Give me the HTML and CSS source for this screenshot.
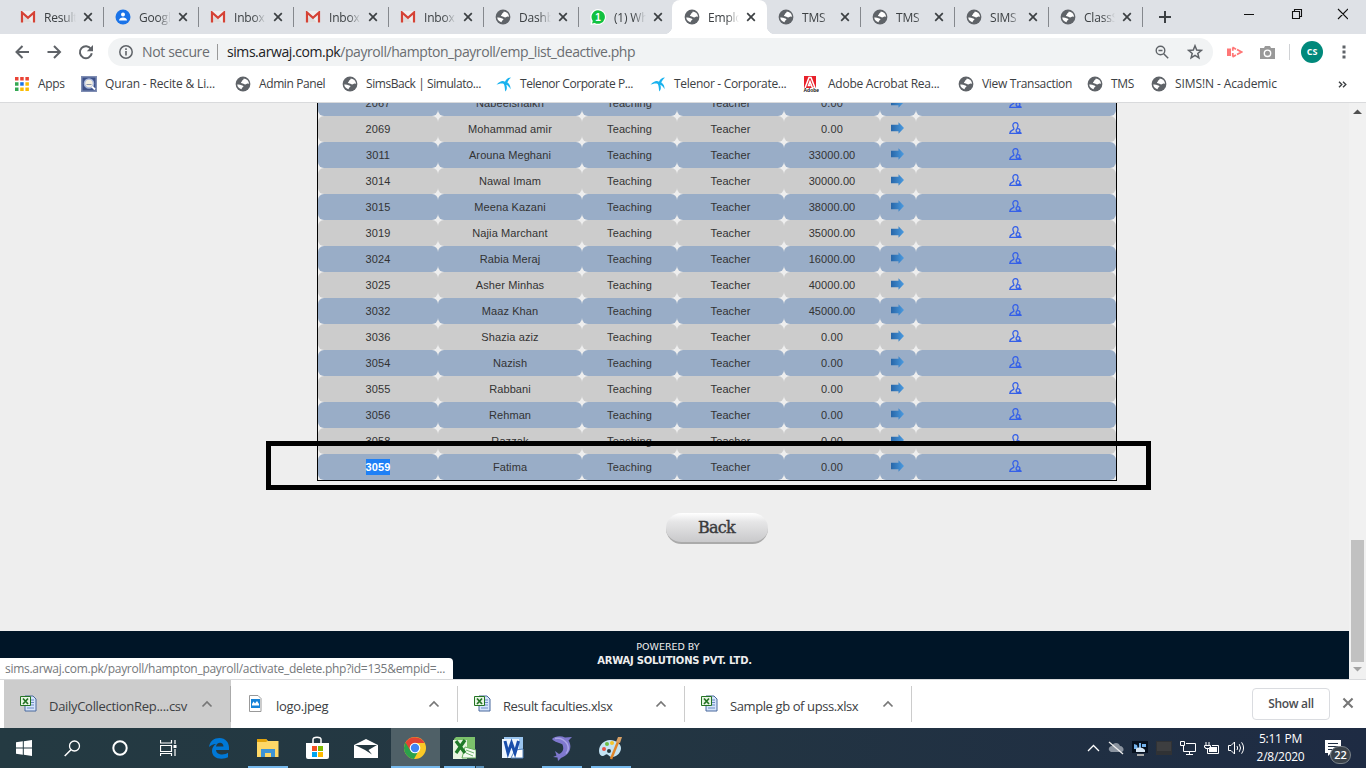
FILE: index.html
```html
<!DOCTYPE html>
<html lang="en">
<head>
<meta charset="utf-8">
<title>Employee list</title>
<link rel="stylesheet" href="styles.css">
</head>
<body>
<svg class="defs" width="0" height="0">
  <symbol id="globe" viewBox="0 0 16 16"><circle cx="8" cy="8" r="7.400" fill="#5f6368"/><path d="M8.500 2.600c.8.500-.2 1.200-1 1.600-.7.400-.4 1.400-1.300 1.900-.6.500.2 1.400 1.500 1.500 1.300.1 1.100 1 2.500 1 1.100 0 1.400-1.200 2.600-1l1.300.2c-.2-2.900-2.600-5.100-5.600-5.200z" fill="#fff"/><path d="M2.200 8.600c1.600-.2 3.300 0 4.400.7 1 .6 1.900.4 1.800 1.200-.1.900-1.300.8-1.600 1.700-.1.500 0 .9-.3 1.100C4.200 12.700 2.400 11 2.200 8.600z" fill="#fff"/></symbol>
  <symbol id="gmail" viewBox="0 0 16 12"><path d="M1 0h14v11.500H1z" fill="#eee"/><path d="M1 11.500h11L5 4z" fill="#ddd"/><path d="M2 11.500V1.500L8 6.800l6-5.300v10" fill="none" stroke="#d54235" stroke-width="2.200"/></symbol>
  <symbol id="x" viewBox="0 0 10 10"><path d="M1.200 1.200l7.600 7.600M8.800 1.200L1.200 8.800" stroke="currentColor" stroke-width="1.700"/></symbol>
  <symbol id="telenor" viewBox="0 0 16 16"><path d="M.5 8.800C4 4.300 7.500 4.300 9 5.800c1-2.500 3-4.300 6-4.300C13.200 3 12 4.800 11.300 6.500c2.200 1.300 3.500 4 3.200 6.800-1-2.300-2.400-3.800-4.200-4.600.8 2.300 1 4.800-1 6.800C8.700 13 9 10 7.800 7.900 5.500 6.800 3 7.700.5 8.800z" fill="#19b2ee"/></symbol>
  <symbol id="arrow" viewBox="0 0 13 12"><linearGradient id="ag" x1="0" x2="1"><stop offset="0" stop-color="#2766a8"/><stop offset="1" stop-color="#4b9be0"/></linearGradient><path d="M0 2.700h7.500V.3L13 6l-5.500 5.700V9.300H0z" fill="url(#ag)"/></symbol>
  <symbol id="user" viewBox="0 0 13 13"><path d="M6.500.7C4.600.7 3.800 2 3.900 3.700 4 5 4.800 5.600 4.900 7 4.500 8.400.9 8 .8 11.300H12.500M6.500.7C8.400.7 9.100 2 9 3.700 8.900 4.900 8.300 5.500 8.100 6.500" fill="none" stroke="#3560e8" stroke-width="1.300"/><circle cx="9" cy="8.500" r="1.900" fill="none" stroke="#3560e8" stroke-width="1.300"/><path d="M10.300 9.800l2 1.800" stroke="#3560e8" stroke-width="1.400"/></symbol>
  <symbol id="chev" viewBox="0 0 12 8"><path d="M1.500 6.500L6 2l4.500 4.500" fill="none" stroke="currentColor" stroke-width="1.700"/></symbol>
  <symbol id="xls" viewBox="0 0 17 17"><path d="M5 1h8l3 3v12H5z" fill="#d5e4fb" stroke="#48699c"/><path d="M10 5h4M10 7.500h4M10 10h4M7 13h7" stroke="#6b8cc3"/><path d="M.5 1.500h10v9H.5z" fill="#e8f5e4" stroke="#247424"/><path d="M3 3.500l5 5.500M8 3.500L3 9" stroke="#247424" stroke-width="1.700"/></symbol>
</svg>

<header class="browser">
  <div class="tabs">
    <div class="tab"><svg class="fav mail"><use href="#gmail"/></svg><span>Result</span><svg class="close"><use href="#x"/></svg></div>
    <div class="tab"><svg class="fav" viewBox="0 0 16 16"><circle cx="8" cy="8" r="7.500" fill="#1a73e8"/><circle cx="8" cy="5.500" r="2" fill="#fff"/><path d="M4 11.500c0-4 8-4 8 0z" fill="#fff"/></svg><span>Google</span><svg class="close"><use href="#x"/></svg></div>
    <div class="tab"><svg class="fav mail"><use href="#gmail"/></svg><span>Inbox</span><svg class="close"><use href="#x"/></svg></div>
    <div class="tab"><svg class="fav mail"><use href="#gmail"/></svg><span>Inbox</span><svg class="close"><use href="#x"/></svg></div>
    <div class="tab"><svg class="fav mail"><use href="#gmail"/></svg><span>Inbox</span><svg class="close"><use href="#x"/></svg></div>
    <div class="tab"><svg class="fav"><use href="#globe"/></svg><span>Dashb</span><svg class="close"><use href="#x"/></svg></div>
    <div class="tab plain"><svg class="fav" viewBox="0 0 16 16"><path d="M8 0a8 8 0 1 1-3.500 15.200L.5 16l.8-4A8 8 0 0 1 8 0z" fill="#fff"/><path d="M8 1.200a6.800 6.800 0 1 1-3.300 12.700l-2.700.7.800-2.700A6.800 6.800 0 0 1 8 1.200z" fill="#12c140"/><text x="5.300" y="12" class="badge1">1</text></svg><span>(1) Wh</span><svg class="close"><use href="#x"/></svg></div>
    <div class="tab active"><svg class="fav"><use href="#globe"/></svg><span>Emplo</span><svg class="close"><use href="#x"/></svg></div>
    <div class="tab"><svg class="fav"><use href="#globe"/></svg><span>TMS</span><svg class="close"><use href="#x"/></svg></div>
    <div class="tab"><svg class="fav"><use href="#globe"/></svg><span>TMS</span><svg class="close"><use href="#x"/></svg></div>
    <div class="tab"><svg class="fav"><use href="#globe"/></svg><span>SIMS</span><svg class="close"><use href="#x"/></svg></div>
    <div class="tab"><svg class="fav"><use href="#globe"/></svg><span>ClassS</span><svg class="close"><use href="#x"/></svg></div>
    <svg class="newtab" viewBox="0 0 12 12"><path d="M6 0v12M0 6h12" stroke="#3c4043" stroke-width="2"/></svg>
    <svg class="winbtns" viewBox="0 0 104 12"><path d="M0 6.500h10M48.500 3.500h7v7h-7zM50.500 3V1.500h7v7H56M94 1l10 10M104 1L94 11" fill="none" stroke="#111" stroke-width="1.100"/></svg>
  </div>
  <div class="toolbar">
    <svg class="nav" viewBox="0 0 80 16"><path d="M15 8H2.500M8.500 2l-6 6 6 6M33.500 8H46M40 2l6 6-6 6M77 5a6 6 0 1 0 .8 4.300" fill="none" stroke="#5f6368" stroke-width="2"/><path d="M79 1v6.200h-6.200z" fill="#5f6368"/></svg>
    <div class="omnibox">
      <svg class="info" viewBox="0 0 14 14"><circle cx="7" cy="7" r="6.200" fill="none" stroke="#5f6368" stroke-width="1.500"/><path d="M7 6v4.500M7 3.300V5" stroke="#5f6368" stroke-width="1.600"/></svg>
      <span class="secure">Not secure</span>
      <span class="url"><b>sims.arwaj.com.pk</b>/payroll/hampton_payroll/emp_list_deactive.php</span>
      <svg class="zoomic" viewBox="0 0 14 14"><circle cx="5.500" cy="5.500" r="4.300" fill="none" stroke="#5f6368" stroke-width="1.400"/><path d="M3.500 5.500h4M8.700 8.700l4.500 4.500" stroke="#5f6368" stroke-width="1.500"/></svg>
      <svg class="star" viewBox="0 0 16 16"><path d="M8 1.800l1.700 4.300 4.600.3-3.500 3 1.100 4.500L8 11.400l-3.900 2.500 1.100-4.500-3.500-3 4.600-.3z" fill="none" stroke="#5f6368" stroke-width="1.500"/></svg>
    </div>
    <svg class="ext" viewBox="0 0 16 12"><path d="M0 2.500h4v7.500H0z" fill="#f77"/><path d="M5.800 1.500v3.200M5.800 7v3.500M5.500 1.300l3.500 1.900M10 3.500l4.500 2.500-4.500 2.500M9 9l-3.500 1.900" fill="none" stroke="#f77" stroke-width="1.800"/></svg>
    <svg class="cam" viewBox="0 0 15 13"><path d="M0 2h4l1-2h5l1 2h4v11H0z" fill="#999"/><circle cx="7.500" cy="7.300" r="3.200" fill="none" stroke="#fff" stroke-width="1.400"/></svg>
    <i class="divider"></i>
    <span class="avatar">CS</span>
    <svg class="dots" viewBox="0 0 4 14"><path d="M.5.500h3v3h-3zM.5 5.500h3v3h-3zM.5 10.500h3v3h-3z" fill="#5f6368"/></svg>
  </div>
  <nav class="bookmarks">
    <a><svg viewBox="0 0 16 16"><path d="M1 1h3.500v3.500H1zM6.200 1h3.500v3.500H6.200zM11.400 1h3.500v3.500h-3.500z" fill="#ea4335"/><path d="M1 6.200h3.500v3.500H1zM1 11.400h3.500v3.500H1z" fill="#34a853"/><path d="M6.200 6.200h3.500v3.500H6.200z" fill="#1a73e8"/><path d="M11.400 6.200h3.500v3.500h-3.500zM11.400 11.400h3.500v3.500h-3.500zM6.200 11.400h3.500v3.500H6.200z" fill="#fbbc04"/></svg>Apps</a>
    <a class="b-quran"><svg viewBox="0 0 16 16"><path d="M0 0h16v16H0z" fill="#7f8db3"/><path d="M1.500 1.500h13v13h-13z" fill="#3c5088"/><circle cx="8" cy="7.500" r="4.500" fill="#f3efe1" stroke="#a8b7dc" stroke-width="1.500"/><path d="M5.500 8.500h5" stroke="#8a93ad"/><path d="M11 10.500l3 3" stroke="#fff" stroke-width="1.800"/></svg>Quran - Recite &amp; Li...</a>
    <a class="b-admin"><svg><use href="#globe"/></svg>Admin Panel</a>
    <a class="b-sims"><svg><use href="#globe"/></svg>SimsBack | Simulato...</a>
    <a class="b-tel"><svg><use href="#telenor"/></svg>Telenor Corporate P...</a>
    <a><svg><use href="#telenor"/></svg>Telenor - Corporate...</a>
    <a class="b-adobe"><svg viewBox="0 0 16 16"><path d="M1 0h12v12H1z" fill="#e8202a"/><path d="M2 12L6 1.500h2L12 12H9.500L7 5.500 5.500 9.500h2" fill="none" stroke="#fff" stroke-width="1.500"/><text x="0.500" y="15.800" class="adobe">Adobe</text></svg>Adobe Acrobat Rea...</a>
    <a><svg><use href="#globe"/></svg>View Transaction</a>
    <a><svg><use href="#globe"/></svg>TMS</a>
    <a class="b-acad"><svg><use href="#globe"/></svg>SIMS!N - Academic</a>
    <svg class="more" viewBox="0 0 9 7"><path d="M1 .7l2.800 2.800L1 6.300M5 .7l2.800 2.800L5 6.300" fill="none" stroke="#3c4043" stroke-width="1.400"/></svg>
  </nav>
</header>

<main class="viewport">
  <div class="page">
    <div class="listing">
      <div class="row odd"><span>2067</span><span>Nabeelshaikh</span><span>Teaching</span><span>Teacher</span><span>0.00</span><span><svg class="go"><use href="#arrow"/></svg></span><span><svg class="usr"><use href="#user"/></svg></span></div>
      <div class="row"><span>2069</span><span>Mohammad amir</span><span>Teaching</span><span>Teacher</span><span>0.00</span><span><svg class="go"><use href="#arrow"/></svg></span><span><svg class="usr"><use href="#user"/></svg></span></div>
      <div class="row odd"><span>3011</span><span>Arouna Meghani</span><span>Teaching</span><span>Teacher</span><span>33000.00</span><span><svg class="go"><use href="#arrow"/></svg></span><span><svg class="usr"><use href="#user"/></svg></span></div>
      <div class="row"><span>3014</span><span>Nawal Imam</span><span>Teaching</span><span>Teacher</span><span>30000.00</span><span><svg class="go"><use href="#arrow"/></svg></span><span><svg class="usr"><use href="#user"/></svg></span></div>
      <div class="row odd"><span>3015</span><span>Meena Kazani</span><span>Teaching</span><span>Teacher</span><span>38000.00</span><span><svg class="go"><use href="#arrow"/></svg></span><span><svg class="usr"><use href="#user"/></svg></span></div>
      <div class="row"><span>3019</span><span>Najia Marchant</span><span>Teaching</span><span>Teacher</span><span>35000.00</span><span><svg class="go"><use href="#arrow"/></svg></span><span><svg class="usr"><use href="#user"/></svg></span></div>
      <div class="row odd"><span>3024</span><span>Rabia Meraj</span><span>Teaching</span><span>Teacher</span><span>16000.00</span><span><svg class="go"><use href="#arrow"/></svg></span><span><svg class="usr"><use href="#user"/></svg></span></div>
      <div class="row"><span>3025</span><span>Asher Minhas</span><span>Teaching</span><span>Teacher</span><span>40000.00</span><span><svg class="go"><use href="#arrow"/></svg></span><span><svg class="usr"><use href="#user"/></svg></span></div>
      <div class="row odd"><span>3032</span><span>Maaz Khan</span><span>Teaching</span><span>Teacher</span><span>45000.00</span><span><svg class="go"><use href="#arrow"/></svg></span><span><svg class="usr"><use href="#user"/></svg></span></div>
      <div class="row"><span>3036</span><span>Shazia aziz</span><span>Teaching</span><span>Teacher</span><span>0.00</span><span><svg class="go"><use href="#arrow"/></svg></span><span><svg class="usr"><use href="#user"/></svg></span></div>
      <div class="row odd"><span>3054</span><span>Nazish</span><span>Teaching</span><span>Teacher</span><span>0.00</span><span><svg class="go"><use href="#arrow"/></svg></span><span><svg class="usr"><use href="#user"/></svg></span></div>
      <div class="row"><span>3055</span><span>Rabbani</span><span>Teaching</span><span>Teacher</span><span>0.00</span><span><svg class="go"><use href="#arrow"/></svg></span><span><svg class="usr"><use href="#user"/></svg></span></div>
      <div class="row odd"><span>3056</span><span>Rehman</span><span>Teaching</span><span>Teacher</span><span>0.00</span><span><svg class="go"><use href="#arrow"/></svg></span><span><svg class="usr"><use href="#user"/></svg></span></div>
      <div class="row"><span>3058</span><span>Razzak</span><span>Teaching</span><span>Teacher</span><span>0.00</span><span><svg class="go"><use href="#arrow"/></svg></span><span><svg class="usr"><use href="#user"/></svg></span></div>
      <div class="row odd"><span><mark>3059</mark></span><span>Fatima</span><span>Teaching</span><span>Teacher</span><span>0.00</span><span><svg class="go"><use href="#arrow"/></svg></span><span><svg class="usr"><use href="#user"/></svg></span></div>
    </div>
    <div class="frame"></div>
    <button class="back">Back</button>
    <footer><small>POWERED BY</small><strong>ARWAJ SOLUTIONS PVT. LTD.</strong></footer>
  </div>
  <div class="scroll"><svg viewBox="0 0 9 5"><path d="M0 5l4.500-4.500L9 5z" fill="#505050"/></svg><i></i><svg viewBox="0 0 9 5"><path d="M0 0l4.500 4.500L9 0z" fill="#a3a3a3"/></svg></div>
  <div class="status">sims.arwaj.com.pk/payroll/hampton_payroll/activate_delete.php?id=135&amp;empid=...</div>
</main>

<section class="shelf">
  <div class="file pressed"><svg class="doc"><use href="#xls"/></svg><span>DailyCollectionRep....csv</span><svg class="chev"><use href="#chev"/></svg></div>
  <div class="file"><svg class="doc" viewBox="0 0 17 17"><path d="M2.500.500h8.500l3 3v13H2.500z" fill="#fff" stroke="#999"/><path d="M4 4h9v9H4z" fill="#1683d8"/><path d="M5 9l1.500-2.500L8 8.500 10 6l2 3v1.500H5z" fill="#fff"/></svg><span>logo.jpeg</span><svg class="chev"><use href="#chev"/></svg></div>
  <div class="file"><svg class="doc"><use href="#xls"/></svg><span class="tight">Result faculties.xlsx</span><svg class="chev"><use href="#chev"/></svg></div>
  <div class="file"><svg class="doc"><use href="#xls"/></svg><span class="tight">Sample gb of upss.xlsx</span><svg class="chev"><use href="#chev"/></svg></div>
  <button class="showall">Show all</button>
  <svg class="shelfclose"><use href="#x"/></svg>
</section>

<section class="taskbar">
  <div class="sys"><svg width="16" height="16" viewBox="0 0 16 16"><path d="M0 2.300L6.800 1.300V7.500H0zM7.800 1.200L16 0v7.500H7.800zM0 8.500h6.800v6.200L0 13.700zM7.800 8.500H16V16l-8.200-1.200z" fill="#fff"/></svg></div>
  <div class="sys"><svg width="17" height="17" viewBox="0 0 17 17"><circle cx="10.500" cy="6" r="5" fill="none" stroke="#fff" stroke-width="1.300"/><path d="M7 9.700L.7 16" stroke="#fff" stroke-width="1.500"/></svg></div>
  <div class="sys"><svg width="16" height="16" viewBox="0 0 16 16"><circle cx="8" cy="8" r="6.700" fill="none" stroke="#fff" stroke-width="2"/></svg></div>
  <div class="sys"><svg width="17" height="16" viewBox="0 0 17 16"><path d="M.5 0v3h11V0M.5 5.500h11v6H.5zM.5 16v-2.500h11V16M15 0v4M15 9v7" fill="none" stroke="#fff" stroke-width="1.200"/><path d="M13.500 5h3v3h-3z" fill="#fff"/></svg></div>
  <div class="app first"><svg width="22" height="22" viewBox="0 0 22 22"><path d="M1 10C2 4 6 1 11.500 1 17.500 1 21 5.500 21 10.500V13H8c.2 3 3 4.500 6.200 4.500 2.200 0 4.300-.7 5.800-1.700v4.500C18.500 21 16.300 21.700 13.500 21.700 7.500 21.700 4 18.500 4 14c0-3 1.500-5.500 4-7C5 7 2.500 8.500 1 10zm7-0.500h7.500C15.500 7 14 5.700 12 5.700c-2 0-3.700 1.500-4 3.800z" fill="#0078d7"/></svg></div>
  <div class="app run"><svg width="22" height="20" viewBox="0 0 22 20"><path d="M0 1h9l2 2h10.500v16H0z" fill="#ffd867"/><path d="M0 1h9l1.500 2L9 4H0z" fill="#e2a30b"/><path d="M4 19v-8h14v8h-4v-4H8v4z" fill="#3e94d6"/></svg></div>
  <div class="app"><svg width="24" height="24" viewBox="0 0 24 24"><path d="M8 7V3.500C8 .5 16 .5 16 3.500V7" fill="none" stroke="#fff" stroke-width="1.500"/><path d="M1 7h23v14q0 2-2 2H3q-2 0-2-2z" fill="#fff"/><path d="M7 10h5v5H7z" fill="#f25022"/><path d="M13 10h5v5h-5z" fill="#7fba00"/><path d="M7 16h5v5H7z" fill="#00a4ef"/><path d="M13 16h5v5h-5z" fill="#ffb900"/></svg></div>
  <div class="app"><svg width="24" height="20" viewBox="0 0 24 20"><path d="M0 7l12-6 12 6v13H0z" fill="#fff"/><path d="M1 7h22l-8.500 5 3.500 4.500L11 12z" fill="#243840"/></svg></div>
  <div class="app current"><svg width="22" height="22" viewBox="0 0 22 22"><circle cx="11" cy="11" r="11" fill="#fbc926"/><path d="M11 11L1.500 5.500A11 11 0 0 0 10 22l5-9z" fill="#2ba14b"/><path d="M1.500 5.500A11 11 0 0 1 20.600 6H11l-5 7z" fill="#e24334"/><circle cx="11" cy="11" r="5.300" fill="#fff"/><circle cx="11" cy="11" r="4.200" fill="#4285f4"/></svg></div>
  <div class="app run multi"><svg width="23" height="22" viewBox="0 0 23 22"><path d="M3 0h19v17H1V2z" fill="#7cc16b"/><path d="M0 3h14v19H0z" fill="#e9f5e1"/><path d="M12 10l11 3v8H9z" fill="#f4faf2" stroke="#65ad5c"/><path d="M3 4l9 12M12 3L3 16" stroke="#207a29" stroke-width="3.300"/><path d="M13 13l8 3M13 16l7 3" stroke="#70b46c"/></svg></div>
  <div class="app"><svg width="22" height="22" viewBox="0 0 22 22"><path d="M2 0h19v21H2z" fill="#9ac5ef"/><path d="M0 2h17v19H0z" fill="#edf5fd"/><path d="M13 13l8-1v9H9z" fill="#fff" stroke="#5484bd"/><path d="M3 4l3 12L9.500 6 13 16 16.500 4" fill="none" stroke="#194eab" stroke-width="3"/></svg></div>
  <div class="app run"><svg width="22" height="25" viewBox="0 0 22 25"><path d="M1 3C4 0 10-.5 14 1.500L21 1l-3.500 3.500c4.500 7 .5 15-7.500 17.500l-3 3-.5-3.500L2 21l3.500-1.500L4 15l4 3c4.500-2 5-5.500 3.500-9.500C8 6.500 4 6.500 1 3z" fill="#7f78cf"/><path d="M4 2.500c4-1 8-.5 12 5 2 4 1 8-1 10" fill="none" stroke="#aaa5e6" stroke-width="1.500"/></svg></div>
  <div class="app run"><svg width="24" height="24" viewBox="0 0 24 24"><path d="M11 4C5 4 0 9 0 15c0 5 4 6 6 4 3-3 4 3 8 2 5-1 8-5 8-9S17 4 11 4z" fill="#c3e3f4"/><circle cx="5" cy="13" r="2" fill="#e75146"/><circle cx="8" cy="8" r="2" fill="#6cbd45"/><circle cx="13" cy="7" r="2" fill="#f3c52b"/><circle cx="10" cy="15" r="2" fill="#243840"/><path d="M12 23l7-17" stroke="#df852a" stroke-width="2.500"/><path d="M17 6l2-5 4 0-2 6z" fill="#d7a066"/></svg></div>
  <div class="tray">
    <svg width="13" height="8" viewBox="0 0 13 8"><path d="M1 7l5.500-5.500L12 7" fill="none" stroke="#fff" stroke-width="1.300"/></svg>
    <svg width="16" height="14" viewBox="0 0 16 14"><path d="M3 11C-1 9 1 5 4 5c1-4 7-4 8 0 4 0 5 6 1 6z" fill="#8a939f"/><path d="M1 1l14 12" stroke="#eee" stroke-width="1.300"/></svg>
    <svg width="16" height="15" viewBox="0 0 16 15"><path d="M0 0h16v12H0z" fill="#07111f"/><path d="M2 3l3 1 1 4H2zM7 2l2 0 0 5H7zM10 3h4v3h-4z" fill="#74b3ed"/><path d="M4 8c2-2 6-2 9 1v2H4z" fill="#d6e6f4"/><path d="M5 13h7v2H5z" fill="#aaa"/></svg>
    <svg width="16" height="15" viewBox="0 0 16 15"><path d="M0 0h16v14H0z" fill="#303235"/><path d="M1 1h14v9H1z" fill="#3d3e40"/></svg>
    <svg width="16" height="14" viewBox="0 0 16 14"><path d="M.5.500h4v4h-4zM6 2.500h9.500v8H3.500V5M9.500 10.500v3M6 13.500h7" fill="none" stroke="#fff"/></svg>
    <svg width="16" height="13" viewBox="0 0 16 13"><path d="M2 0v3M5 0v3M.5 3.500h6v2h-1v1h-4v-1h-1zM3.500 7v4.500h11v-8H8" fill="none" stroke="#fff"/><path d="M6 5h7v5H5V7z" fill="#fff"/></svg>
    <svg width="17" height="14" viewBox="0 0 17 14"><path d="M.5 4.500H3l3.500-3.500v12L3 9.500H.5zM9 5q1.300 2 0 4M11.300 3.200q2.500 3.800 0 7.600M13.600 1.300q4 5.700 0 11.400" fill="none" stroke="#fff"/></svg>
  </div>
  <div class="clock"><span>5:11 PM</span><span>2/8/2020</span></div>
  <div class="notes"><svg width="16" height="16" viewBox="0 0 16 16"><path d="M0 0h16v13H6l-3 3v-3H0z" fill="#fff"/><path d="M3 3.500h10M3 6.500h10M3 9.500h7" stroke="#1f2e43"/></svg><b>22</b></div>
</section>
</body>
</html>
```
FILE: styles.css
```css
* { box-sizing: border-box; }
body { margin: 0; width: 1366px; height: 768px; overflow: hidden; display: flex; flex-direction: column; font-family: "Open Sans", "Noto Sans", sans-serif; font-size: 12px; background: #fff; color: #3c4043; }
svg { flex: none; display: block; }
.defs { position: absolute; }
.browser { height: 103px; flex: none; border-bottom: 1px solid #d9dadc; }

.tabs { height: 34px; background: #dee1e6; display: flex; padding-left: 9px; }
.tab { width: 95px; height: 34px; flex: none; display: flex; align-items: center; padding-left: 11px; position: relative; }
.tab.plain, .tab.active, .tab.active ~ .tab { width: 94px; }
.tab::after { content: ""; position: absolute; right: 0; top: 7px; width: 1px; height: 20px; background: #85888d; }
.tab.plain::after, .tab.active::after { display: none; }
.tab.active { width: 95px; margin-left: -1px; padding-left: 12px; background: #fff; border-radius: 8px 8px 0 0; }
.tab.active::before { content: ""; position: absolute; left: -8px; right: -8px; bottom: 0; height: 8px; background: radial-gradient(circle at 0 0, transparent 8px, #fff 8.500px) left / 8px 8px no-repeat, radial-gradient(circle at 100% 0, transparent 8px, #fff 8.500px) right / 8px 8px no-repeat; }
.fav { width: 16px; height: 16px; }
.fav.mail { height: 12px; }
.tab span { margin-left: 8px; width: 32px; overflow: hidden; white-space: nowrap; letter-spacing: -.2px; -webkit-mask-image: linear-gradient(90deg, #000 60%, transparent); mask-image: linear-gradient(90deg, #000 60%, transparent); }
.tab.active span, .tab.active ~ .tab span { width: 31px; }
.close { width: 10px; height: 10px; margin-left: 7px; color: #3c4043; }
.badge1 { font: bold 10px "Liberation Sans", sans-serif; fill: #fff; }
.newtab { width: 12px; height: 12px; margin: 11px 0 0 16px; }
.winbtns { width: 104px; height: 12px; margin: 8px 0 0 73px; }

.toolbar { height: 36px; display: flex; align-items: center; padding: 0 0 0 14px; }
.nav { width: 80px; height: 16px; }
.omnibox { width: 1105px; height: 28px; margin-left: 14px; border-radius: 14px; background: #f1f3f4; display: flex; align-items: center; flex: none; padding-left: 11px; font-size: 14px; color: #6a6d71; }
.info { width: 14px; height: 14px; }
.secure { margin-left: 9px; width: 76px; border-right: 1px solid #999; line-height: 16px; white-space: nowrap; letter-spacing: -.35px; }
.url { margin-left: 9px; width: 919px; white-space: nowrap; letter-spacing: -.43px; padding-bottom: 1px; }
.url b { font-weight: 400; color: #202124; }
.zoomic { width: 14px; height: 14px; margin-left: 9px; }
.star { width: 16px; height: 16px; margin-left: 18px; }
.ext { width: 16px; height: 12px; margin-left: 14px; }
.cam { width: 15px; height: 13px; margin-left: 17px; }
.divider { width: 1px; height: 16px; background: #d0d2d5; margin-left: 14px; }
.avatar { width: 22px; height: 22px; border-radius: 50%; background: #00897b; color: #fff; font: 700 9px/22px "Open Sans", sans-serif; text-align: center; margin-left: 11px; }
.dots { width: 4px; height: 14px; margin-left: 19px; }

.bookmarks { height: 28px; display: grid; grid-template-columns: 67px 154px 107px 154px 154px 153px 155px 129px 64px 187px 9px; align-items: center; padding-left: 14px; letter-spacing: -.3px; }
.bookmarks a { display: flex; align-items: center; gap: 8px; white-space: nowrap; padding-bottom: 1px; }
.bookmarks a svg { width: 16px; height: 16px; }
.bookmarks .b-quran { letter-spacing: -.15px; }
.bookmarks .b-admin { letter-spacing: -.4px; }
.bookmarks .b-sims, .bookmarks .b-tel { letter-spacing: -.43px; }
.bookmarks .b-adobe { letter-spacing: -.25px; gap: 9px; }
.bookmarks .b-acad { letter-spacing: -.1px; }
.more { width: 9px; height: 7px; }
.adobe { font: bold 5px "Liberation Sans", sans-serif; fill: #111; letter-spacing: 0; }

.viewport { height: 576px; flex: none; display: flex; position: relative; }
.page { width: 1349px; background: #eee; overflow: hidden; display: flex; flex-direction: column; align-items: center; position: relative; }
.listing { width: 800px; margin: -14px 0 0 317px; align-self: flex-start; border: 1px solid #000; flex: none; }
.row { display: grid; grid-template-columns: 120px 144px 95px 107px 96px 36px 200px; height: 26px; font: 11px "Liberation Sans", Arial, sans-serif; color: #333; }
.row span { background: #ccc; border-radius: 6px; display: flex; align-items: center; justify-content: center; letter-spacing: .1px; }
.row.odd span { background: #99adc7; }
.row mark { background: #1e80f6; color: #fff; font-weight: 700; line-height: 16px; }
.go { width: 13px; height: 12px; margin-bottom: 3px; margin-right: 1px; }
.usr { width: 13px; height: 13px; margin-bottom: 2px; margin-right: 1px; }
.frame { position: absolute; left: 266px; top: 338px; width: 885px; height: 49px; border: 5px solid #000; }
.back { width: 102px; height: 31px; margin: 32px 0 0 85px; flex: none; border: 0; border-bottom: 2px solid #aaa; border-radius: 16px; background: linear-gradient(#fff, #e6e6e7 30%, #c9c9cb); font: 400 16px/28px "DejaVu Serif", serif; letter-spacing: -.7px; -webkit-text-stroke: .4px #3b3b3d; color: #3b3b3d; padding: 0 1px 0 0; }
footer { width: 100%; height: 48px; margin-top: auto; background: #001527; color: #eee; display: flex; flex-direction: column; align-items: center; padding-top: 9px; font: 10px/14px "DejaVu Sans", sans-serif; }
footer small { font-size: 9.500px; margin-right: 13px; }
footer strong { font-size: 10px; letter-spacing: -.22px; }
.scroll { width: 17px; background: #f1f1f1; display: flex; flex-direction: column; align-items: center; padding: 6px 0 7px; }
.scroll svg { width: 9px; height: 5px; }
.scroll i { width: 13px; height: 122px; background: #c1c1c1; margin: auto 0 5px; }
.status { position: absolute; left: 0; bottom: 0; width: 453px; height: 21px; background: #fff; border-top-right-radius: 4px; padding-left: 5px; line-height: 21px; color: #75787b; letter-spacing: -.28px; white-space: nowrap; }

.shelf { height: 49px; flex: none; border-top: 1px solid #d9dadc; display: flex; align-items: center; padding-left: 4px; }
.file { width: 227px; height: 48px; display: flex; align-items: center; padding-left: 16px; position: relative; font-size: 13px; letter-spacing: -.3px; }
.file::after { content: ""; position: absolute; right: 0; top: 6px; width: 1px; height: 36px; background: #ccc; }
.file.pressed { background: #ccc; }
.file.pressed::after { background: #aaa; }
.doc { width: 17px; height: 17px; margin-bottom: 2px; }
.file span { margin-left: 12px; width: 152px; white-space: nowrap; padding-top: 3px; }
.file .tight { letter-spacing: -.4px; }
.chev { width: 12px; height: 8px; color: #777; }
.showall { margin-left: 340px; width: 78px; height: 32px; border: 1px solid #dadce0; border-radius: 4px; background: #fff; font: 600 12px "Open Sans", sans-serif; letter-spacing: -.35px; color: #4a4d51; padding: 0 0 2px; }
.shelfclose { width: 12px; height: 12px; margin: 0 0 2px 12px; color: #777; }

.taskbar { height: 40px; flex: none; background: linear-gradient(90deg, #243a42, #233642 45%, #1e2b43); display: flex; }
.sys { width: 48px; display: flex; align-items: center; justify-content: center; }
.app { width: 49px; display: flex; align-items: center; justify-content: center; position: relative; padding-right: 1px; }
.first { margin-left: 3px; padding-right: 2px; }
.run::after, .current::after { content: ""; position: absolute; left: 4px; right: 5px; bottom: 0; height: 2px; background: #76b9ed; }
.current { background: #4f6067; }
.current::after { left: 0; right: 0; }
.multi::after { background: linear-gradient(90deg, #76b9ed 31px, #243a42 31px 32px, #5a8fb7 32px); }
.tray { margin-left: 451px; display: flex; align-items: center; gap: 8px; }
.clock { width: 71px; color: #fff; display: flex; flex-direction: column; align-items: center; justify-content: center; line-height: 18px; letter-spacing: -.25px; }
.notes { width: 49px; padding: 12px 0 0 9px; position: relative; }
.notes b { position: absolute; left: 14px; top: 18px; width: 21px; height: 18px; border-radius: 9px; border: 1px solid #7c848b; background: #3a424a; color: #fff; font: 600 11px/16px "Open Sans", sans-serif; text-align: center; }
```
